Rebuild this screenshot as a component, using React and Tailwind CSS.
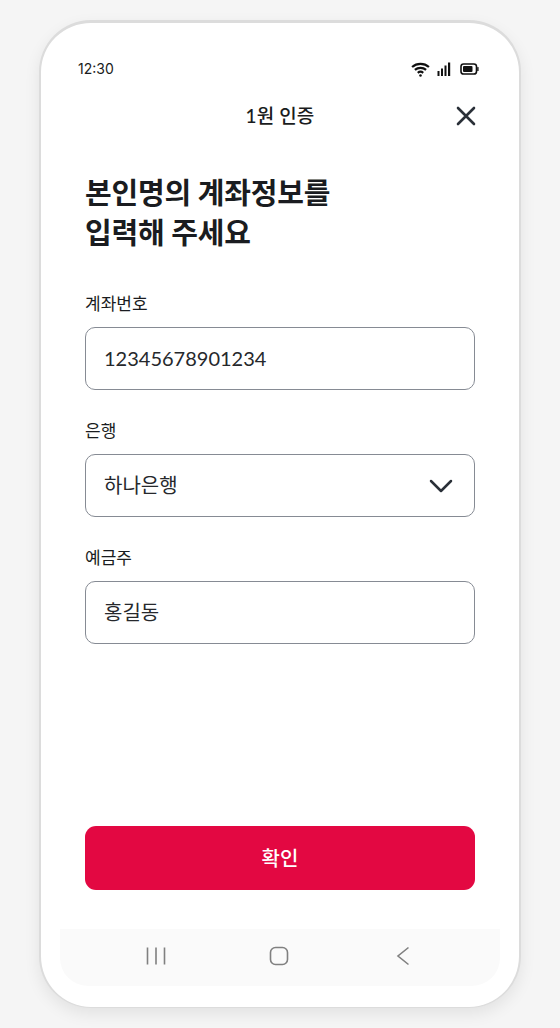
const FONT = "font-['Lato','Noto_Sans_CJK_KR',sans-serif]";

function Field({ label, value, children }) {
  return (
    <div className="flex flex-col">
      <label className="h-[24px] text-[17px] leading-[24px] text-[#1a1c20]">{label}</label>
      <div className="mt-[11px] h-[63px] flex items-center justify-between rounded-[10px] border border-[#868b94] pl-[18px] pr-[20px]">
        <span className="pb-[2px] text-[20px] leading-[28px] text-[#26282c]">{value}</span>
        {children}
      </div>
    </div>
  );
}

export default function App() {
  return (
    <div className={`w-[560px] h-[1028px] bg-[#f5f5f5] pt-[20px] px-[39px] overflow-hidden ${FONT}`}>
      <div className="w-[482px] h-[988px] bg-white rounded-[52px] border-x-[2px] border-t-[3px] border-b-[1px] border-[#dcdcdc] shadow-[0_6px_16px_rgba(0,0,0,0.08)] flex flex-col">
        <div className="pt-[33px] flex items-center justify-between pl-[37px] pr-[40px] h-[59px] box-border">
          <span className="font-['Inter','Noto_Sans_CJK_KR',sans-serif] text-[14px] leading-[24px] text-[#1a1c20]">12:30</span>
          <div className="flex items-center gap-[7px]">
            <svg width="19" height="15" viewBox="0 0 18 14" fill="none" stroke="#111" strokeWidth="2.1">
              <path d="M1 4.6C5.6.6 12.4.6 17 4.6" />
              <path d="M3.7 7.4c3-2.6 7.6-2.6 10.6 0" />
              <path d="M6.4 10.1c1.5-1.2 3.7-1.2 5.2 0" />
              <circle cx="9" cy="12.6" r="1.2" fill="#111" stroke="none" />
            </svg>
            <svg width="14" height="14" viewBox="0 0 14 14" fill="#111">
              <rect x="0.5" y="9" width="2" height="5" />
              <rect x="4" y="6.5" width="2" height="7.5" />
              <rect x="7.5" y="3.5" width="2" height="10.5" />
              <rect x="11" y="0.5" width="2.2" height="13.5" />
            </svg>
            <svg className="ml-[2px]" width="19" height="12" viewBox="0 0 19 12" fill="none">
              <rect x="1" y="1" width="15.5" height="10" rx="2.6" stroke="#111" strokeWidth="1.6" />
              <rect x="3" y="3" width="9.5" height="6" rx="1" fill="#111" />
              <rect x="17.2" y="4" width="1.4" height="4" rx="0.6" fill="#111" />
            </svg>
          </div>
        </div>

        <div className="relative mt-[16px] h-[36px] flex items-center justify-center">
          <h2 className="text-[19px] leading-[24px] font-medium text-[#1a1c20] tracking-[0.1px]">1원 인증</h2>
          <svg className="absolute right-[40px] top-[5px]" width="26" height="26" viewBox="0 0 26 26" fill="none" stroke="#2a3038" strokeWidth="2.6" strokeLinecap="round">
            <path d="M5 5l16 16M21 5L5 21" />
          </svg>
        </div>

        <div className="flex-1 flex flex-col px-[44px] pt-[39px]">
          <h1 className="text-[29px] leading-[40px] font-bold tracking-[-0.2px] text-[#1a1c20]">
            본인명의 계좌정보를<br />입력해 주세요
          </h1>
          <div className="mt-[39px] flex flex-col gap-[29px]">
            <Field label="계좌번호" value="12345678901234" />
            <Field label="은행" value="하나은행">
              <svg width="26" height="26" viewBox="0 0 26 26" fill="none" stroke="#2a3038" strokeWidth="2.5" strokeLinecap="round" strokeLinejoin="round">
                <path d="M3 8l10 10L23 8" />
              </svg>
            </Field>
            <Field label="예금주" value="홍길동" />
          </div>
          <button className="mt-[182px] h-[64px] w-full rounded-[11px] bg-[#e30842] text-white text-[20px] font-medium">
            확인
          </button>
        </div>

        <div className="mx-[19px] mb-[21px] h-[57px] bg-[#fafafa] rounded-b-[28px] flex items-center pb-[3px] pl-[86px]">
          <svg width="20" height="20" viewBox="0 0 20 20" fill="none" stroke="#808080" strokeWidth="1.6">
            <path d="M1.5 1.5v17M10 1.5v17M18.5 1.5v17" />
          </svg>
          <svg className="ml-[103px]" width="20" height="20" viewBox="0 0 20 20" fill="none" stroke="#808080" strokeWidth="1.6">
            <rect x="1.5" y="1.5" width="17" height="17" rx="5" />
          </svg>
          <svg className="ml-[106px]" width="16" height="20" viewBox="0 0 16 20" fill="none" stroke="#808080" strokeWidth="1.6">
            <path d="M13.5 1.5L3 10l10.5 8.5" />
          </svg>
        </div>
      </div>
    </div>
  );
}
